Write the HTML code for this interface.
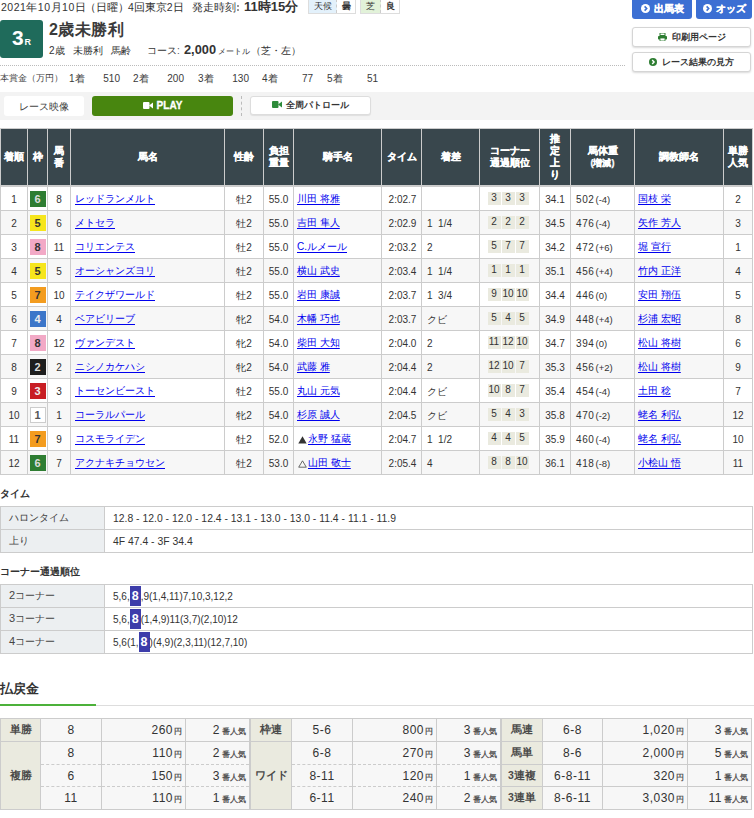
<!DOCTYPE html>
<html lang="ja">
<head>
<meta charset="utf-8">
<style>
*{box-sizing:border-box;margin:0;padding:0}
html,body{width:754px;height:818px;overflow:hidden;background:#fff}
body{font-family:"Liberation Sans",sans-serif;color:#333;font-size:10px;position:relative}
.a{position:absolute;white-space:nowrap}
/* header */
.dt{top:0;font-size:10.5px;line-height:15px;color:#333}
.wx{top:-2px;height:16px;border:1px solid #ddd;display:flex;font-size:8.5px;line-height:14px}
.wx span{display:block;text-align:center}
#badge{left:0;top:20px;width:43px;height:38px;background:#1f6b5b;border-radius:3px;color:#fff;font-weight:bold;text-align:center;line-height:36px}
#badge .n{font-size:21px}
#badge .r{font-size:9px;margin-left:1px}
#title{left:49px;top:20px;font-size:16px;font-weight:bold;line-height:20px;color:#3a3a3a;letter-spacing:0.5px}
.sb{top:44px;font-size:10px;line-height:14px}
#dots{left:0;top:65px;width:625px;border-top:1px dotted #bbb}
#prize{left:0;top:72px;font-size:9px;line-height:13px;color:#444}
.btnb{top:-3px;height:22px;background:#3c6fd3;border-radius:3px;color:#fff;font-weight:bold;font-size:9.5px;line-height:24px;text-align:center;-webkit-text-stroke:0.3px #fff}
.btnw{left:632px;width:119px;height:20px;background:#fff;border:1px solid #d5d5d5;border-radius:3px;box-shadow:0 1px 2px rgba(0,0,0,.15);font-size:8.8px;line-height:18px;text-align:center;color:#333;font-weight:bold}
.ico{display:inline-block;width:8px;height:8px;border-radius:50%;background:#fff;vertical-align:-1px;margin-right:4px;position:relative}
.pz{top:72px;font-size:10px;line-height:13px;color:#3a3a3a}
.pzv{top:72px;width:51px;text-align:right;font-size:10px;line-height:13px;color:#3a3a3a}
/* gray band */
#band{left:0;top:92px;width:754px;height:28px;background:#f3f3f3}
.vb{height:20px;border-radius:3px;text-align:center;font-size:10px;line-height:20px}
/* results table */
table{border-collapse:collapse;table-layout:fixed}
#res{position:absolute;left:0;top:128px;width:752px}
#res th{background:#39474d;color:#fff;font-weight:bold;-webkit-text-stroke:0.25px #fff;font-size:10px;line-height:12px;border:1px solid #ccc;border-bottom:2px solid #ccc;height:57px;text-align:center;padding:0}
#res td{border:1px solid #ccc;height:24px;font-size:10px;text-align:center;padding:2px 0 0 0;white-space:nowrap}
#res tr:nth-child(odd) td{background:#f7f7f7}
#res tr:nth-child(2) td{height:25px;padding-top:3px}
#res td.l{text-align:left;padding-left:3px}
#res td.df{padding-left:5px}
#res td.bw{padding-left:5px}
.bn{letter-spacing:0.6px}
.mk{display:inline-block;margin:0 1px 0 1px;vertical-align:-1px}
#res td .sm{font-size:9.5px;margin-left:1px}
#res a{color:#0000ee;text-decoration:underline;text-underline-offset:2px;position:relative;top:-1px}
#res td:nth-child(4){padding-left:4px}
#res td:nth-child(8){padding-left:2px}
.wk{display:inline-block;width:16px;height:16px;line-height:16px;font-size:11px;font-weight:bold;vertical-align:middle;position:relative;top:-1px}
.w1{background:#fff;border:1px solid #ccc;line-height:14px;color:#555}
.w2{background:#1e1e1e;color:#ddd}
.w3{background:#c81e24;color:#eee}
.w4{background:#3c76c9;color:#eee}
.w5{background:#f6e51c;color:#333}
.w6{background:#2e7d32;color:#ddd}
.w7{background:#f39c1f;color:#333}
.w8{background:#f2a9c6;color:#333}
.cn{display:inline-block;width:13px;height:13px;background:#eaeadf;margin-right:1px;font-size:10px;line-height:11px;vertical-align:middle;position:relative;left:-1px;top:-1px}
.sm{font-size:9px}
/* sub tables */
h3{position:absolute;left:0;font-size:10px;font-weight:bold;line-height:14px;color:#333}
.st{position:absolute;left:0;width:753px}
.st td{border:1px solid #ccc;height:23px;font-size:10.4px;padding:0 0 0 8px;white-space:nowrap}
.st td.h{background:#eceff1;color:#444;width:104px;padding-left:8px;font-size:9.5px}
.hl{display:inline-block;background:#3d3daa;color:#fff;font-weight:bold;width:11px;text-align:center;line-height:20px;font-size:12.5px;letter-spacing:0}
.cv td+td{font-size:10px;letter-spacing:0}
/* payout */
#pay{left:0;top:680px;font-size:13px;font-weight:bold;line-height:18px}
#payline{left:0;top:705px;width:754px;height:1px;background:#ddd}
#payline2{left:0;top:704px;width:96px;height:2px;background:#4cb13a}
.pt{position:absolute;top:718px;width:251px}
.pt td{border:1px solid #ccc;height:23px;background:#f7f7f7;font-size:12px;padding:0;white-space:nowrap;letter-spacing:0.5px}
.pt td.h{background:#eaeadf;text-align:center;color:#4a4a4a;font-size:10.5px;font-weight:bold;letter-spacing:0}
.pt td.c{text-align:center}
.pt tr:nth-child(3) td{height:22px}
.pt td.m{text-align:right;padding-right:3px}
.pt td.p{text-align:right;padding-right:3px}
.pt tr.u td.c,.pt tr.u td.m,.pt tr.u td.p{border-bottom:1px dashed #ccc}
.pt tr.d td.c,.pt tr.d td.m,.pt tr.d td.p{border-top:1px dashed #ccc}
.yen{font-size:8px;font-weight:bold;letter-spacing:0;margin-left:1px;color:#555}
.nin{font-size:8px;font-weight:bold;letter-spacing:0;margin-left:2px;color:#555}
</style>
</head>
<body>
<div class="a dt" style="left:1px;letter-spacing:0.5px">2021年10月10日</div><div class="a dt" style="left:85px">（日曜）</div><div class="a dt" style="left:128px">4回東京2日</div><div class="a dt" style="left:192px">発走時刻</div><div class="a" style="left:237px;top:5px;width:2px;height:2px;background:#999"></div><div class="a" style="left:237px;top:9px;width:2px;height:2px;background:#999"></div><div class="a dt" style="left:244px;top:-1px;font-size:13px;font-weight:bold">11時15分</div>
<div class="a wx" style="left:308px;width:48px"><span style="width:28px;background:#e3f1fb;border-right:1px dashed #ccc">天候</span><span style="width:18px;font-weight:bold">曇</span></div>
<div class="a wx" style="left:360px;width:40px"><span style="width:20px;background:#e2f2d9;border-right:1px dashed #ccc">芝</span><span style="width:18px;font-weight:bold">良</span></div>

<div id="badge" class="a"><span class="n">3</span><span class="r">R</span></div>
<div id="title" class="a">2歳未勝利</div>
<div class="a sb" style="left:49px">2歳</div><div class="a sb" style="left:73px">未勝利</div><div class="a sb" style="left:111px">馬齢</div><div class="a sb" style="left:147px">コース</div><div class="a sb" style="left:177px;color:#555">:</div><div class="a sb" style="left:184px;top:43px;font-size:12.8px;font-weight:bold">2,000</div><div class="a sb" style="left:218px;font-size:8px;top:45px">メートル</div><div class="a sb" style="left:251px">（芝・左）</div>
<div id="dots" class="a"></div>
<div id="prize" class="a">本賞金（万円）</div>
<div class="a pz" style="left:69px">1着</div><div class="a pzv" style="left:69px">510</div>
<div class="a pz" style="left:133px">2着</div><div class="a pzv" style="left:133px">200</div>
<div class="a pz" style="left:198px">3着</div><div class="a pzv" style="left:198px">130</div>
<div class="a pz" style="left:262px">4着</div><div class="a pzv" style="left:262px">77</div>
<div class="a pz" style="left:327px">5着</div><div class="a pzv" style="left:327px">51</div>

<div class="a btnb" style="left:632px;width:60px"><svg width="9" height="9" viewBox="0 0 10 10" style="vertical-align:-1px;margin-right:4px"><circle cx="5" cy="5" r="5" fill="#fff"/><path d="M4 2.6 L6.3 5 L4 7.4" stroke="#3c6fd3" stroke-width="1.8" fill="none"/></svg>出馬表</div>
<div class="a btnb" style="left:696px;width:56px"><svg width="9" height="9" viewBox="0 0 10 10" style="vertical-align:-1px;margin-right:4px"><circle cx="5" cy="5" r="5" fill="#fff"/><path d="M4 2.6 L6.3 5 L4 7.4" stroke="#3c6fd3" stroke-width="1.8" fill="none"/></svg>オッズ</div>
<div class="a btnw" style="top:27px"><svg width="9" height="8" viewBox="0 0 9 8" style="vertical-align:-1px;margin-right:5px"><rect x="2" y="0" width="5" height="2.5" fill="none" stroke="#2e7d32" stroke-width="1"/><rect x="0" y="3" width="9" height="3.5" rx="0.8" fill="#2e7d32"/><rect x="2" y="5" width="5" height="3" fill="#fff" stroke="#2e7d32" stroke-width="0.8"/></svg>印刷用ページ</div>
<div class="a btnw" style="top:52px"><svg width="8" height="8" viewBox="0 0 10 10" style="vertical-align:-1px;margin-right:5px"><circle cx="5" cy="5" r="5" fill="#2e7d32"/><path d="M4 2.6 L6.3 5 L4 7.4" stroke="#fff" stroke-width="1.8" fill="none"/></svg>レース結果の見方</div>

<div id="band" class="a"></div>
<div class="a vb" style="left:4px;top:96px;width:80px;background:#fff;line-height:21px;color:#444">レース映像</div>
<div class="a vb" style="left:92px;top:96px;width:141px;background:#48860f;color:#fff;font-weight:bold;-webkit-text-stroke:0.3px #fff"><svg width="10" height="7" viewBox="0 0 10 7" style="vertical-align:0px;margin-right:4px"><rect x="0" y="0" width="6.5" height="7" rx="1" fill="#fff"/><path d="M6 3.5 L10 0.5 L10 6.5 Z" fill="#fff"/></svg>PLAY</div>
<div class="a" style="left:241px;top:96px;height:20px;border-left:1px dashed #bbb"></div>
<div class="a vb" style="left:250px;top:96px;width:121px;height:19px;background:#fff;border:1px solid #ddd;line-height:17px;font-weight:bold;font-size:8.8px;box-shadow:0 1px 1px rgba(0,0,0,.08)"><svg width="10" height="7" viewBox="0 0 10 7" style="vertical-align:0px;margin-right:4px"><rect x="0" y="0" width="6.5" height="7" rx="1" fill="#2e8b3a"/><path d="M6 3.5 L10 0.5 L10 6.5 Z" fill="#2e8b3a"/></svg>全周パトロール</div>


<table id="res">
<colgroup><col style="width:27px"><col style="width:20px"><col style="width:23px"><col style="width:154px"><col style="width:39px"><col style="width:30px"><col style="width:88px"><col style="width:40px"><col style="width:58px"><col style="width:60px"><col style="width:31px"><col style="width:64px"><col style="width:89px"><col style="width:29px"></colgroup>
<tr><th>着順</th><th>枠</th><th>馬<br>番</th><th>馬名</th><th>性齢</th><th>負担<br>重量</th><th>騎手名</th><th>タイム</th><th>着差</th><th>コーナー<br>通過順位</th><th>推<br>定<br>上<br>り</th><th>馬体重<br><span class="sm">(増減)</span></th><th>調教師名</th><th>単勝<br>人気</th></tr>
<tr><td>1</td><td><span class="wk w6">6</span></td><td>8</td><td class="l"><a>レッドランメルト</a></td><td>牡2</td><td>55.0</td><td class="l"><a>川田 将雅</a></td><td>2:02.7</td><td class="l df"></td><td><span class="cn">3</span><span class="cn">3</span><span class="cn">3</span></td><td>34.1</td><td class="l bw"><span class="bn">502</span><span class="sm">(-4)</span></td><td class="l"><a>国枝 栄</a></td><td>2</td></tr>
<tr><td>2</td><td><span class="wk w5">5</span></td><td>6</td><td class="l"><a>メトセラ</a></td><td>牡2</td><td>55.0</td><td class="l"><a>吉田 隼人</a></td><td>2:02.9</td><td class="l df">1&nbsp;&nbsp;1/4</td><td><span class="cn">2</span><span class="cn">2</span><span class="cn">2</span></td><td>34.5</td><td class="l bw"><span class="bn">476</span><span class="sm">(-4)</span></td><td class="l"><a>矢作 芳人</a></td><td>3</td></tr>
<tr><td>3</td><td><span class="wk w8">8</span></td><td>11</td><td class="l"><a>コリエンテス</a></td><td>牡2</td><td>55.0</td><td class="l"><a>C.ルメール</a></td><td>2:03.2</td><td class="l df">2</td><td><span class="cn">5</span><span class="cn">7</span><span class="cn">7</span></td><td>34.2</td><td class="l bw"><span class="bn">472</span><span class="sm">(+6)</span></td><td class="l"><a>堀 宣行</a></td><td>1</td></tr>
<tr><td>4</td><td><span class="wk w5">5</span></td><td>5</td><td class="l"><a>オーシャンズヨリ</a></td><td>牡2</td><td>55.0</td><td class="l"><a>横山 武史</a></td><td>2:03.4</td><td class="l df">1&nbsp;&nbsp;1/4</td><td><span class="cn">1</span><span class="cn">1</span><span class="cn">1</span></td><td>35.1</td><td class="l bw"><span class="bn">456</span><span class="sm">(+4)</span></td><td class="l"><a>竹内 正洋</a></td><td>4</td></tr>
<tr><td>5</td><td><span class="wk w7">7</span></td><td>10</td><td class="l"><a>テイクザワールド</a></td><td>牡2</td><td>55.0</td><td class="l"><a>岩田 康誠</a></td><td>2:03.7</td><td class="l df">1&nbsp;&nbsp;3/4</td><td><span class="cn">9</span><span class="cn">10</span><span class="cn">10</span></td><td>34.4</td><td class="l bw"><span class="bn">446</span><span class="sm">(0)</span></td><td class="l"><a>安田 翔伍</a></td><td>5</td></tr>
<tr><td>6</td><td><span class="wk w4">4</span></td><td>4</td><td class="l"><a>ベアビリーブ</a></td><td>牝2</td><td>54.0</td><td class="l"><a>木幡 巧也</a></td><td>2:03.7</td><td class="l df">クビ</td><td><span class="cn">5</span><span class="cn">4</span><span class="cn">5</span></td><td>34.9</td><td class="l bw"><span class="bn">448</span><span class="sm">(+4)</span></td><td class="l"><a>杉浦 宏昭</a></td><td>8</td></tr>
<tr><td>7</td><td><span class="wk w8">8</span></td><td>12</td><td class="l"><a>ヴァンデスト</a></td><td>牝2</td><td>54.0</td><td class="l"><a>柴田 大知</a></td><td>2:04.0</td><td class="l df">2</td><td><span class="cn">11</span><span class="cn">12</span><span class="cn">10</span></td><td>34.7</td><td class="l bw"><span class="bn">394</span><span class="sm">(0)</span></td><td class="l"><a>松山 将樹</a></td><td>6</td></tr>
<tr><td>8</td><td><span class="wk w2">2</span></td><td>2</td><td class="l"><a>ニシノカケハシ</a></td><td>牝2</td><td>54.0</td><td class="l"><a>武藤 雅</a></td><td>2:04.4</td><td class="l df">2</td><td><span class="cn">12</span><span class="cn">10</span><span class="cn">7</span></td><td>35.3</td><td class="l bw"><span class="bn">456</span><span class="sm">(+2)</span></td><td class="l"><a>松山 将樹</a></td><td>9</td></tr>
<tr><td>9</td><td><span class="wk w3">3</span></td><td>3</td><td class="l"><a>トーセンビースト</a></td><td>牡2</td><td>55.0</td><td class="l"><a>丸山 元気</a></td><td>2:04.4</td><td class="l df">クビ</td><td><span class="cn">10</span><span class="cn">8</span><span class="cn">7</span></td><td>35.4</td><td class="l bw"><span class="bn">454</span><span class="sm">(-4)</span></td><td class="l"><a>土田 稔</a></td><td>7</td></tr>
<tr><td>10</td><td><span class="wk w1">1</span></td><td>1</td><td class="l"><a>コーラルパール</a></td><td>牝2</td><td>54.0</td><td class="l"><a>杉原 誠人</a></td><td>2:04.5</td><td class="l df">クビ</td><td><span class="cn">5</span><span class="cn">4</span><span class="cn">3</span></td><td>35.8</td><td class="l bw"><span class="bn">470</span><span class="sm">(-2)</span></td><td class="l"><a>蛯名 利弘</a></td><td>12</td></tr>
<tr><td>11</td><td><span class="wk w7">7</span></td><td>9</td><td class="l"><a>コスモライデン</a></td><td>牡2</td><td>52.0</td><td class="l"><svg class="mk" width="9" height="8" viewBox="0 0 9 8"><path d="M4.5 0.3 L8.7 7.5 L0.3 7.5 Z" fill="#333"/></svg><a>永野 猛蔵</a></td><td>2:04.7</td><td class="l df">1&nbsp;&nbsp;1/2</td><td><span class="cn">4</span><span class="cn">4</span><span class="cn">5</span></td><td>35.9</td><td class="l bw"><span class="bn">460</span><span class="sm">(-4)</span></td><td class="l"><a>蛯名 利弘</a></td><td>10</td></tr>
<tr><td>12</td><td><span class="wk w6">6</span></td><td>7</td><td class="l"><a>アクナキチョウセン</a></td><td>牡2</td><td>53.0</td><td class="l"><svg class="mk" width="9" height="8" viewBox="0 0 9 8"><path d="M4.5 0.8 L8.3 7.2 L0.7 7.2 Z" fill="none" stroke="#444" stroke-width="0.8"/></svg><a>山田 敬士</a></td><td>2:05.4</td><td class="l df">4</td><td><span class="cn">8</span><span class="cn">8</span><span class="cn">10</span></td><td>36.1</td><td class="l bw"><span class="bn">418</span><span class="sm">(-8)</span></td><td class="l"><a>小桧山 悟</a></td><td>11</td></tr>

</table>

<h3 style="top:487px">タイム</h3>
<table class="st" style="top:506px">
<tr><td class="h">ハロンタイム</td><td>12.8 - 12.0 - 12.0 - 12.4 - 13.1 - 13.0 - 13.0 - 11.4 - 11.1 - 11.9</td></tr>
<tr><td class="h">上り</td><td>4F 47.4 - 3F 34.4</td></tr>
</table>

<h3 style="top:565px">コーナー通過順位</h3>
<table class="st cv" style="top:584px">
<tr><td class="h"><span style="font-size:11px">2</span>コーナー</td><td>5,6,<span class="hl">8</span>,9(1,4,11)7,10,3,12,2</td></tr>
<tr><td class="h"><span style="font-size:11px">3</span>コーナー</td><td>5,6,<span class="hl">8</span>(1,4,9)11(3,7)(2,10)12</td></tr>
<tr><td class="h"><span style="font-size:11px">4</span>コーナー</td><td>5,6(1,<span class="hl">8</span>)(4,9)(2,3,11)(12,7,10)</td></tr>
</table>

<div id="pay" class="a">払戻金</div>
<div id="payline" class="a"></div>
<div id="payline2" class="a"></div>

<table class="pt" style="left:0;width:249px">
<colgroup><col style="width:40px"><col style="width:61px"><col style="width:84px"><col style="width:64px"></colgroup>
<tr><td class="h">単勝</td><td class="c">8</td><td class="m">260<span class="yen">円</span></td><td class="p">2<span class="nin">番人気</span></td></tr>
<tr class="u"><td class="h" rowspan="3">複勝</td><td class="c">8</td><td class="m">110<span class="yen">円</span></td><td class="p">2<span class="nin">番人気</span></td></tr>
<tr class="d u"><td class="c">6</td><td class="m">150<span class="yen">円</span></td><td class="p">3<span class="nin">番人気</span></td></tr>
<tr class="d"><td class="c">11</td><td class="m">110<span class="yen">円</span></td><td class="p">1<span class="nin">番人気</span></td></tr>
</table>
<table class="pt" style="left:250px;width:250px">
<colgroup><col style="width:41px"><col style="width:61px"><col style="width:84px"><col style="width:64px"></colgroup>
<tr><td class="h">枠連</td><td class="c">5-6</td><td class="m">800<span class="yen">円</span></td><td class="p">3<span class="nin">番人気</span></td></tr>
<tr class="u"><td class="h" rowspan="3">ワイド</td><td class="c">6-8</td><td class="m">270<span class="yen">円</span></td><td class="p">3<span class="nin">番人気</span></td></tr>
<tr class="d u"><td class="c">8-11</td><td class="m">120<span class="yen">円</span></td><td class="p">1<span class="nin">番人気</span></td></tr>
<tr class="d"><td class="c">6-11</td><td class="m">240<span class="yen">円</span></td><td class="p">2<span class="nin">番人気</span></td></tr>
</table>
<table class="pt" style="left:501px;width:250px">
<colgroup><col style="width:41px"><col style="width:60px"><col style="width:85px"><col style="width:64px"></colgroup>
<tr><td class="h">馬連</td><td class="c">6-8</td><td class="m">1,020<span class="yen">円</span></td><td class="p">3<span class="nin">番人気</span></td></tr>
<tr><td class="h">馬単</td><td class="c">8-6</td><td class="m">2,000<span class="yen">円</span></td><td class="p">5<span class="nin">番人気</span></td></tr>
<tr><td class="h">3連複</td><td class="c">6-8-11</td><td class="m">320<span class="yen">円</span></td><td class="p">1<span class="nin">番人気</span></td></tr>
<tr><td class="h">3連単</td><td class="c">8-6-11</td><td class="m">3,030<span class="yen">円</span></td><td class="p">11<span class="nin">番人気</span></td></tr>
</table>

</body>
</html>
